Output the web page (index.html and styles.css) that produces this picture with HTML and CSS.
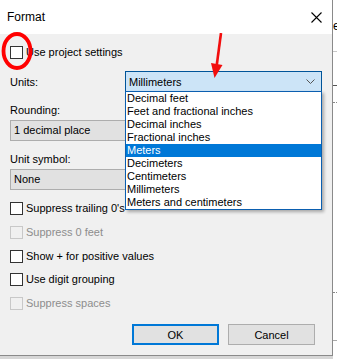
FILE: index.html
```html
<!DOCTYPE html>
<html lang="en">
<head>
    <meta charset="UTF-8">
    <meta name="viewport" content="width=device-width, initial-scale=1.0">
    <title>Format</title>
    <link rel="stylesheet" href="styles.css">
</head>
<body>
    <div class="screen">
        <div class="dialog">
            <div class="titlebar">
                <span class="title">Format</span>
                <svg class="close" width="11" height="11" viewBox="0 0 11 11">
                    <path d="M0.5 0.5 L10.5 10.5 M10.5 0.5 L0.5 10.5" stroke="#000" stroke-width="1.1" fill="none"/>
                </svg>
            </div>

            <div class="content">
                <label class="check first">
                    <span class="box"></span>Use project settings
                </label>

                <div class="units-row">
                    <span>Units:</span>
                    <div class="select">
                        <span>Millimeters</span>
                        <svg width="9" height="5" viewBox="0 0 9 5">
                            <path d="M0.5 0.5 L4.5 4.5 L8.5 0.5" stroke="#555" stroke-width="1" fill="none"/>
                        </svg>
                    </div>
                </div>

                <div class="label">Rounding:</div>
                <div class="field">1 decimal place</div>

                <div class="label">Unit symbol:</div>
                <div class="field">None</div>

                <div class="checks">
                    <label class="check"><span class="box"></span>Suppress trailing 0's</label>
                    <label class="check disabled"><span class="box"></span>Suppress 0 feet</label>
                    <label class="check"><span class="box"></span>Show + for positive values</label>
                    <label class="check"><span class="box"></span>Use digit grouping</label>
                    <label class="check disabled"><span class="box"></span>Suppress spaces</label>
                </div>

                <div class="buttons">
                    <button class="btn default">OK</button>
                    <button class="btn">Cancel</button>
                </div>
            </div>

            <!-- open dropdown of the Units select -->
            <ul class="dropdown">
                <li>Decimal feet</li>
                <li>Feet and fractional inches</li>
                <li>Decimal inches</li>
                <li>Fractional inches</li>
                <li class="active">Meters</li>
                <li>Decimeters</li>
                <li>Centimeters</li>
                <li>Millimeters</li>
                <li>Meters and centimeters</li>
            </ul>

            <!-- red annotations drawn over the dialog -->
            <svg class="mark-circle" width="36" height="42" viewBox="0 0 36 42">
                <ellipse cx="16" cy="20" rx="13.5" ry="17" stroke="#f00" stroke-width="3.8" fill="none"/>
            </svg>
            <svg class="mark-arrow" width="16" height="48" viewBox="0 0 16 48">
                <path d="M11 0 L6.5 34" stroke="#f20d0d" stroke-width="2.6" fill="none"/>
                <path d="M1 30 L12.5 32 L4.5 45 Z" fill="#f20d0d"/>
            </svg>
        </div>

        <div class="backdrop">
            <div class="bd-top">e</div>
            <div class="bd-a"></div>
            <div class="bd-b"></div>
            <div class="bd-c"></div>
            <div class="bd-d"></div>
        </div>
    </div>
</body>
</html>
```

FILE: styles.css
```css
:root {
    --face: #f0f0f0;
    --field: #e1e1e1;
    --field-border: #adadad;
    --accent: #0078d7;
    --text: #000000;
    --muted: #8d8d8d;
}

* {
    margin: 0;
    padding: 0;
    box-sizing: border-box;
}

body {
    font-family: "Liberation Sans", Arial, sans-serif;
    font-size: 11px;
    color: var(--text);
    background-color: #d6d6d6;
}

.screen {
    display: flex;
    width: 337px;
    height: 359px;
}

.dialog {
    position: relative;
    width: 333px;
    height: 356px;
    background-color: var(--face);
    border-right: 1px solid #8a8a8a;
    border-bottom: 1px solid #8a8a8a;
}

.titlebar {
    height: 34px;
    background-color: #ffffff;
    display: flex;
    align-items: center;
    justify-content: space-between;
    padding: 2px 10px 0 7px;
}

.title {
    font-size: 12px;
    padding-bottom: 2px;
}

.close {
    margin-top: -1px;
}

.content {
    padding: 12px 10px 0 10px;
}

.check {
    display: flex;
    align-items: center;
    gap: 3px;
    height: 13px;
    line-height: 13px;
}

.box {
    width: 13px;
    height: 13px;
    border: 1px solid #333333;
    background-color: #ffffff;
}

.check.disabled {
    color: var(--muted);
}

.check.disabled .box {
    border-color: #c8c8c8;
    background-color: #f0f0f0;
}

.units-row {
    display: flex;
    align-items: center;
    justify-content: space-between;
    margin-top: 12px;
}

.select {
    width: 197px;
    height: 21px;
    background-color: #cce4f7;
    border: 1px solid #005499;
    display: flex;
    align-items: center;
    justify-content: space-between;
    padding: 0 6px 0 3px;
}

.label {
    margin-top: 12px;
    height: 13px;
    line-height: 13px;
}

.field {
    margin-top: 3px;
    width: 312px;
    height: 21px;
    line-height: 19px;
    background-color: var(--field);
    border: 1px solid var(--field-border);
    padding-left: 3px;
}

.checks {
    margin-top: 12px;
    display: flex;
    flex-direction: column;
    gap: 10.75px;
}

.buttons {
    margin-top: 14px;
    display: flex;
    justify-content: flex-end;
    gap: 9px;
    padding-right: 7px;
}

.btn {
    width: 87px;
    height: 21px;
    font-family: inherit;
    font-size: 11px;
    color: var(--text);
    background-color: var(--field);
    border: 1px solid var(--field-border);
}

.btn.default {
    border: 2px solid var(--accent);
}

.dropdown {
    position: absolute;
    left: 125px;
    top: 91px;
    width: 197px;
    list-style: none;
    background-color: #ffffff;
    border: 1px solid #0b5fb0;
    box-shadow: 2px 2px 3px rgba(0, 0, 0, 0.3);
}

.dropdown li {
    height: 13px;
    line-height: 13px;
    padding-left: 1px;
    white-space: nowrap;
}

.dropdown li.active {
    background-color: var(--accent);
    color: #ffffff;
}

.mark-circle {
    position: absolute;
    left: 1px;
    top: 31px;
}

.mark-arrow {
    position: absolute;
    left: 210px;
    top: 33px;
}

.backdrop {
    flex: 1;
    height: 359px;
    background-color: #ffffff;
    display: flex;
    flex-direction: column;
    overflow: hidden;
}

.bd-top {
    height: 52px;
    padding-top: 19px;
    font-size: 12px;
    border-bottom: 1px solid #c8c8c8;
}

.bd-a {
    height: 34px;
    border-bottom: 1px solid #555555;
}

.bd-b {
    height: 17px;
    border-bottom: 1px dotted #888888;
}

.bd-c {
    height: 190px;
    border-bottom: 1px dotted #888888;
}

.bd-d {
    height: 48px;
    border-bottom: 1px solid #aaaaaa;
}
```
